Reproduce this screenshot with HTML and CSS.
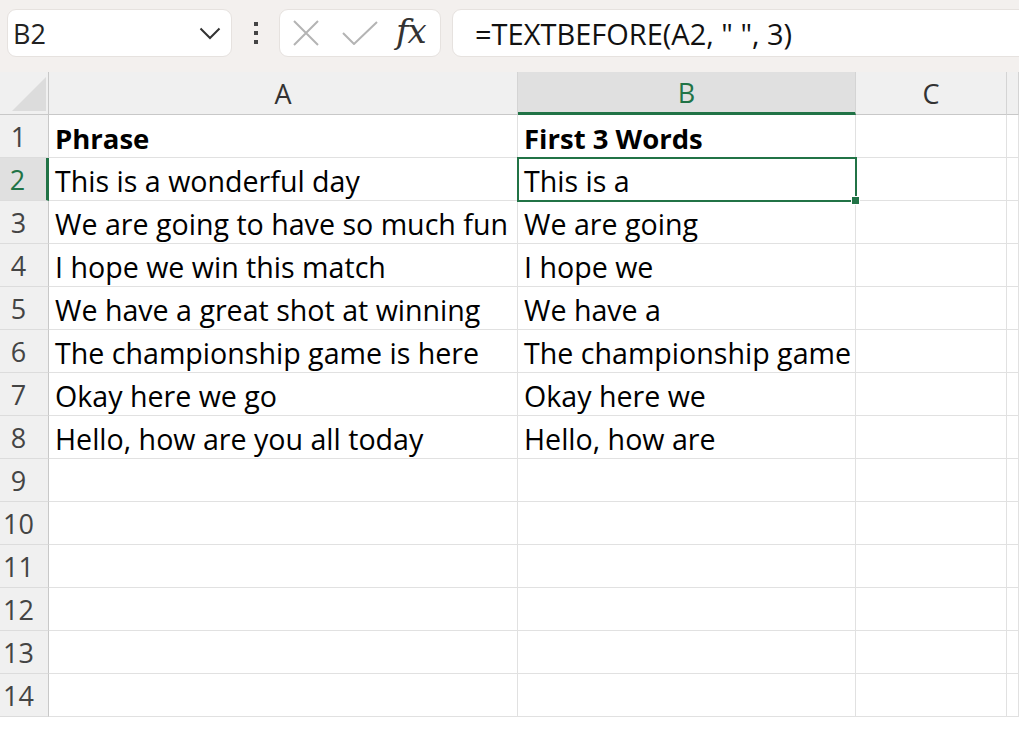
FILE: index.html
```html
<!DOCTYPE html>
<html lang="en">
<head>
  <meta charset="UTF-8">
  <meta name="viewport" content="width=device-width, initial-scale=1.0">
  <title>TEXTBEFORE</title>
  <link rel="stylesheet" href="styles.css">
</head>
<body>
  <div class="toolbar">
    <div class="name-box">
      <span>B2</span>
      <svg class="chevron" width="22" height="13" viewBox="0 0 22 13"><path d="M1.5 1.5 L11 11 L20.5 1.5" fill="none" stroke="#333" stroke-width="2"/></svg>
    </div>
    <div class="dots"><i></i><i></i><i></i></div>
    <div class="fx-box">
      <svg width="28" height="26" viewBox="0 0 28 26"><path d="M2 1 L26 25 M26 1 L2 25" stroke="#b4b4b4" stroke-width="2" fill="none"/></svg>
      <svg width="36" height="24" viewBox="0 0 36 24"><path d="M1 12 L12 23 L35 1" stroke="#b4b4b4" stroke-width="2" fill="none"/></svg>
      <span class="fx">fx</span>
    </div>
    <div class="formula-box">=TEXTBEFORE(A2, " ", 3)</div>
  </div>

  <div class="sheet" id="sheet"></div>

  <script>
    const rows = [
      ['Phrase', 'First 3 Words'],
      ['This is a wonderful day', 'This is a'],
      ['We are going to have so much fun', 'We are going'],
      ['I hope we win this match', 'I hope we'],
      ['We have a great shot at winning', 'We have a'],
      ['The championship game is here', 'The championship game'],
      ['Okay here we go', 'Okay here we'],
      ['Hello, how are you all today', 'Hello, how are']
    ];
    const sheet = document.getElementById('sheet');
    let html = '<div class="corner"><span></span></div>' +
      '<div class="col-head">A</div><div class="col-head active">B</div>' +
      '<div class="col-head">C</div><div class="col-head"></div>';
    for (let r = 1; r <= 14; r++) {
      const data = rows[r - 1] || ['', ''];
      const sel = r === 2;
      html += `<div class="row-head${sel ? ' active' : ''}">${r}</div>`;
      html += `<div class="cell${r === 1 ? ' bold' : ''}">${data[0]}</div>`;
      html += `<div class="cell${r === 1 ? ' bold' : ''}${sel ? ' selected' : ''}">${data[1]}${sel ? '<span class="handle"></span>' : ''}</div>`;
      html += '<div class="cell"></div><div class="cell"></div>';
    }
    sheet.innerHTML = html;
  </script>
</body>
</html>
```

FILE: styles.css
```css
body {
  margin: 0;
  background: #ffffff;
  font-family: 'Open Sans', 'Noto Sans', sans-serif;
  overflow: hidden;
}
.toolbar {
  height: 72px;
  background: #f3f0ee;
  display: flex;
  align-items: flex-start;
  padding: 9px 0 0 7px;
  box-sizing: border-box;
}
.name-box, .fx-box, .formula-box {
  height: 48px;
  background: #ffffff;
  border: 1px solid #e6e2df;
  border-radius: 9px;
  box-sizing: border-box;
  display: flex;
  align-items: center;
}
.name-box {
  width: 225px;
  padding: 0 10px 0 5px;
  justify-content: space-between;
  font-size: 27px;
  color: #222;
}
.dots {
  width: 47px;
  height: 48px;
  display: flex;
  flex-direction: column;
  align-items: center;
  justify-content: center;
  gap: 5px;
}
.dots i {
  width: 4px;
  height: 4px;
  background: #444;
}
.fx-box {
  width: 162px;
  padding-left: 12px;
  gap: 22px;
}
.fx {
  font-family: 'DejaVu Serif', 'Liberation Serif', serif;
  font-style: italic;
  font-size: 34px;
  color: #333;
  margin-left: -4px;
  margin-top: -4px;
  letter-spacing: -1px;
}
.formula-box {
  margin-left: 11px;
  flex: 1;
  margin-right: -20px;
  padding-left: 22px;
  font-size: 29px;
  color: #111;
}
.sheet {
  display: grid;
  grid-template-columns: 49px 469px 338px 151px 1fr;
  grid-auto-rows: 43px;
  color: #000;
}
.corner, .col-head {
  background: #f0f0f0;
  border-bottom: 1px solid #c8c8c8;
  border-right: 1px solid #d4d4d4;
  box-sizing: border-box;
}
.corner {
  border-right: 1px solid #c8c8c8;
  position: relative;
}
.corner span {
  position: absolute;
  left: 12px;
  top: 5px;
  width: 0;
  height: 0;
  border-left: 34px solid transparent;
  border-bottom: 34px solid #dcdcdc;
}
.col-head {
  display: flex;
  align-items: center;
  justify-content: center;
  font-size: 27px;
  color: #333;
}
.col-head.active {
  background: #e0e0e0;
  color: #217346;
  border-bottom: 3px solid #217346;
}
.row-head {
  background: #f0f0f0;
  border-right: 1px solid #c8c8c8;
  border-bottom: 1px solid #dcdcdc;
  box-sizing: border-box;
  font-size: 27px;
  color: #444;
  display: flex;
  align-items: center;
  justify-content: center;
  padding-right: 11px;
}
.row-head.active {
  background: #e0e0e0;
  color: #217346;
  border-right: 3px solid #217346;
}
.cell {
  border-right: 1px solid #e1e1e1;
  border-bottom: 1px solid #e1e1e1;
  box-sizing: border-box;
  font-size: 28.6px;
  padding: 0 0 0 6px;
  display: flex;
  align-items: flex-end;
  white-space: nowrap;
  position: relative;
}
.cell.bold {
  font-weight: 700;
  font-size: 27.5px;
}
.cell.selected {
  outline: 2px solid #217346;
  outline-offset: -1px;
  z-index: 1;
}
.handle {
  position: absolute;
  right: -5px;
  bottom: -5px;
  width: 7px;
  height: 7px;
  background: #217346;
  border: 1px solid #ffffff;
}
```
